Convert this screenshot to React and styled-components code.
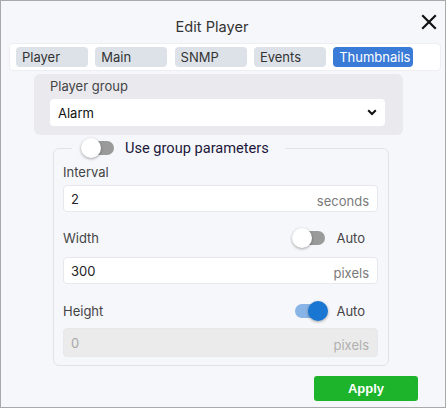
import React, { useState } from "react";
import styled, { createGlobalStyle } from "styled-components";

const GlobalStyle = createGlobalStyle`
  html, body {
    margin: 0;
    padding: 0;
    background: #f6f7fb;
  }
  * {
    box-sizing: border-box;
  }
`;

const Dialog = styled.div`
  width: 446px;
  height: 408px;
  border: 1px solid #a9a9a9;
  background: #f6f7fb;
  font-family: Inter, "Noto Sans", sans-serif;
  color: #333;
  display: flex;
  flex-direction: column;
  position: relative;
`;

const Header = styled.div`
  height: 42px;
  display: flex;
  align-items: flex-end;
  justify-content: center;
  padding-bottom: 7px;
  padding-right: 22px;
  font-size: 14.6px;
  color: #333;
`;

const CloseBtn = styled.button`
  position: absolute;
  top: 13px;
  right: 8px;
  width: 16px;
  height: 16px;
  padding: 0;
  border: none;
  background: none;
  cursor: pointer;
  display: flex;
  align-items: center;
  justify-content: center;
`;

const TabBar = styled.div`
  margin: 0 4px 0 8px;
  height: 28px;
  background: #fff;
  border: 1px solid #eceef2;
  border-radius: 4px;
  display: flex;
  align-items: center;
  gap: 7.3px;
  padding: 0 6px;
`;

const Tab = styled.div`
  width: ${(p) => (p.$wide ? "80px" : "72px")};
  height: 20px;
  border-radius: 4px;
  background: ${(p) => (p.$active ? "#3a7bd8" : "#dde2e9")};
  color: ${(p) => (p.$active ? "#fff" : "#333")};
  font-size: 13px;
  line-height: 20px;
  padding-left: 6px;
`;

const Body = styled.div`
  padding-left: 33px;
  padding-top: 3px;
  display: flex;
  flex-direction: column;
`;

const GroupBox = styled.div`
  width: 369px;
  background: #e9e9ee;
  border-radius: 6px;
  padding: 4px 18px 9px 16px;
`;

const Label = styled.div`
  font-size: 13px;
  line-height: 16px;
  color: #444;
`;

const SelectBox = styled.div`
  margin-top: 5px;
  height: 27px;
  background: #fff;
  border-radius: 4px;
  display: flex;
  align-items: center;
  justify-content: space-between;
  padding: 0 8px 0 8px;
  font-size: 13px;
  color: #111;
`;

const Fieldset = styled.fieldset`
  margin: 3px 0 0 19px;
  width: 336px;
  border: 1px solid #dfe2e8;
  border-radius: 6px;
  padding: 0 10px 8px 9px;
`;

const Legend = styled.legend`
  margin-left: 9px;
  padding: 0 16px 0 12px;
  display: flex;
  align-items: center;
  gap: 11px;
  height: 20px;
  font-family: Roboto, "Noto Sans", sans-serif;
  font-size: 14.6px;
  color: #21173a;
`;

const Track = styled.span`
  position: relative;
  display: inline-block;
  width: 30px;
  height: 14px;
  border-radius: 7px;
  background: ${(p) => (p.$on ? "#88b4e6" : "#9a9a9a")};
  flex-shrink: 0;
`;

const Thumb = styled.span`
  position: absolute;
  top: -3px;
  left: ${(p) => (p.$on ? "13px" : "-3px")};
  width: 20px;
  height: 20px;
  border-radius: 50%;
  background: ${(p) => (p.$on ? "#1976d2" : "#fff")};
  box-shadow: 0 1px 3px rgba(0, 0, 0, 0.35);
`;

const FieldLabel = styled(Label)`
  margin-top: ${(p) => p.$top || "0px"};
  line-height: 20px;
`;

const Row = styled.div`
  margin-top: ${(p) => p.$top || "0px"};
  height: 24px;
  display: flex;
  align-items: center;
`;

const RowLabel = styled.div`
  flex: 1;
  font-size: 13px;
  color: #444;
`;

const AutoLabel = styled.span`
  margin-left: 11px;
  margin-right: 13px;
  font-size: 13px;
  color: #444;
`;

const InputBox = styled.div`
  margin-top: ${(p) => p.$top || "3px"};
  height: ${(p) => p.$h || "27px"};
  border: 1px solid #e6e8ec;
  border-radius: 4px;
  background: ${(p) => (p.$disabled ? "#ebebeb" : "#fff")};
  display: flex;
  align-items: center;
  justify-content: space-between;
  padding: 0 8px 0 7px;
  font-size: 13px;
  color: ${(p) => (p.$disabled ? "#a8a8a8" : "#222")};
`;

const Unit = styled.span`
  color: ${(p) => (p.$disabled ? "#b0b0b0" : "#7a7a7a")};
  font-size: 13px;
  padding-top: 4px;
`;

const Footer = styled.div`
  width: 384px;
  display: flex;
  justify-content: flex-end;
  margin-top: 10px;
`;

const ApplyBtn = styled.button`
  width: 104px;
  height: 25px;
  border: none;
  border-radius: 3px;
  background: #1db32a;
  color: #fff;
  font-family: "Liberation Sans", Arial, sans-serif;
  font-weight: bold;
  font-size: 13px;
  cursor: pointer;
`;

const Switch = ({ on, onClick }) => (
  <Track $on={on} onClick={onClick}>
    <Thumb $on={on} />
  </Track>
);

const tabs = ["Player", "Main", "SNMP", "Events", "Thumbnails"];

export default function App() {
  const [useGroup, setUseGroup] = useState(false);
  const [autoWidth, setAutoWidth] = useState(false);
  const [autoHeight, setAutoHeight] = useState(true);

  return (
    <>
      <GlobalStyle />
      <Dialog>
        <Header>Edit Player</Header>
        <CloseBtn aria-label="Close">
          <svg width="16" height="16" viewBox="0 0 16 16">
            <path d="M2 2 L14 14 M14 2 L2 14" stroke="#111" strokeWidth="2.2" strokeLinecap="square" />
          </svg>
        </CloseBtn>
        <TabBar>
          {tabs.map((t) => (
            <Tab key={t} $active={t === "Thumbnails"} $wide={t === "Thumbnails"}>
              {t}
            </Tab>
          ))}
        </TabBar>
        <Body>
          <GroupBox>
            <Label>Player group</Label>
            <SelectBox>
              <span>Alarm</span>
              <svg width="10" height="7" viewBox="0 0 10 7">
                <path d="M1.2 1.2 L5 5 L8.8 1.2" fill="none" stroke="#111" strokeWidth="2" />
              </svg>
            </SelectBox>
          </GroupBox>
          <Fieldset>
            <Legend>
              <Switch on={useGroup} onClick={() => setUseGroup(!useGroup)} />
              Use group parameters
            </Legend>
            <FieldLabel $top="4px">Interval</FieldLabel>
            <InputBox>
              <span>2</span>
              <Unit>seconds</Unit>
            </InputBox>
            <Row $top="14px">
              <RowLabel>Width</RowLabel>
              <Switch on={autoWidth} onClick={() => setAutoWidth(!autoWidth)} />
              <AutoLabel>Auto</AutoLabel>
            </Row>
            <InputBox $top="7px">
              <span>300</span>
              <Unit>pixels</Unit>
            </InputBox>
            <Row $top="15px">
              <RowLabel>Height</RowLabel>
              <Switch on={autoHeight} onClick={() => setAutoHeight(!autoHeight)} />
              <AutoLabel>Auto</AutoLabel>
            </Row>
            <InputBox $top="5px" $h="29px" $disabled>
              <span>0</span>
              <Unit $disabled>pixels</Unit>
            </InputBox>
          </Fieldset>
          <Footer>
            <ApplyBtn>Apply</ApplyBtn>
          </Footer>
        </Body>
      </Dialog>
    </>
  );
}
